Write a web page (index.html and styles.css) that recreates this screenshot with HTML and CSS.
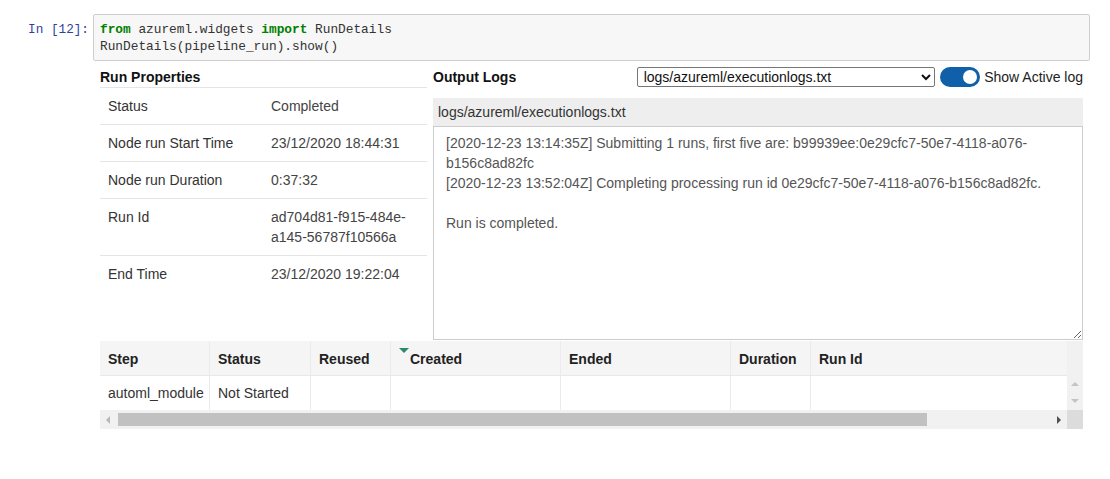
FILE: index.html
```html
<!DOCTYPE html>
<html>
<head>
<meta charset="utf-8">
<link rel="stylesheet" href="styles.css">
</head>
<body>
<div class="cell">
  <div class="prompt">In [12]:</div>
  <div class="code"><span class="kw">from</span> azureml.widgets <span class="kw">import</span> RunDetails<br>RunDetails(pipeline_run).show()</div>
</div>
<div class="output">
  <div class="widget">
    <div class="top">
      <div class="props">
        <div class="props-title">Run Properties</div>
        <div class="prop-row"><div class="k">Status</div><div class="v">Completed</div></div>
        <div class="prop-row"><div class="k">Node run Start Time</div><div class="v">23/12/2020 18:44:31</div></div>
        <div class="prop-row"><div class="k">Node run Duration</div><div class="v">0:37:32</div></div>
        <div class="prop-row"><div class="k">Run Id</div><div class="v">ad704d81-f915-484e-a145-56787f10566a</div></div>
        <div class="prop-row last"><div class="k">End Time</div><div class="v">23/12/2020 19:22:04</div></div>
      </div>
      <div class="logs">
        <div class="logs-head">
          <div class="logs-title">Output Logs</div>
          <select class="log-select"><option>logs/azureml/executionlogs.txt</option></select>
          <div class="toggle"><span class="knob"></span></div>
          <div class="toggle-label">Show Active log</div>
        </div>
        <div class="log-bar">logs/azureml/executionlogs.txt</div>
        <div class="log-text">[2020-12-23 13:14:35Z] Submitting 1 runs, first five are: b99939ee:0e29cfc7-50e7-4118-a076-b156c8ad82fc<br>[2020-12-23 13:52:04Z] Completing processing run id 0e29cfc7-50e7-4118-a076-b156c8ad82fc.<br><br>Run is completed.</div>
      </div>
    </div>
    <div class="steps">
      <div class="steps-body">
        <div class="steps-grid">
          <div class="th">Step</div>
          <div class="th">Status</div>
          <div class="th">Reused</div>
          <div class="th"><span class="sort"></span>Created</div>
          <div class="th">Ended</div>
          <div class="th">Duration</div>
          <div class="th">Run Id</div>
          <div class="td">automl_module</div>
          <div class="td">Not Started</div>
          <div class="td"></div>
          <div class="td"></div>
          <div class="td"></div>
          <div class="td"></div>
          <div class="td"></div>
        </div>
        <div class="vscroll">
          <div class="vhead"></div>
          <div class="vtrack"><span class="up"></span><span class="down"></span></div>
        </div>
      </div>
      <div class="hscroll">
        <div class="harrow"><span class="left"></span></div>
        <div class="htrack"><div class="thumb"></div><span class="right"></span></div>
        <div class="corner"></div>
      </div>
    </div>
  </div>
</div>
</body>
</html>
```
FILE: styles.css
```css
html, body {
  margin: 0;
  padding: 0;
  background: #fff;
}
body {
  padding-top: 14px;
  font-family: "Liberation Sans", Arial, sans-serif;
  font-size: 14px;
  color: #333;
}
.cell {
  display: flex;
  align-items: flex-start;
}
.prompt {
  width: 89px;
  box-sizing: border-box;
  padding-top: 7px;
  padding-right: 0;
  text-align: right;
  font-family: "Liberation Mono", monospace;
  font-size: 12.7px;
  line-height: 17px;
  color: #303f9f;
}
.code {
  margin-left: 4px;
  width: 997px;
  box-sizing: border-box;
  height: 47px;
  padding: 6px 6px;
  border: 1px solid #cfcfcf;
  border-radius: 2px;
  background: #f7f7f7;
  font-family: "Liberation Mono", monospace;
  font-size: 12.8px;
  line-height: 17px;
  color: #333;
}
.kw {
  color: #008000;
  font-weight: bold;
}
.output {
  padding-left: 100px;
  padding-top: 5px;
}
.widget {
  width: 983px;
}
.top {
  display: flex;
  gap: 6px;
}
.props {
  width: 327px;
}
.props-title {
  height: 21px;
  line-height: 22px;
  font-weight: bold;
  color: #111;
  border-bottom: 1px solid #e5e5e5;
}
.prop-row {
  display: grid;
  grid-template-columns: 163px 1fr;
  padding: 8px 8px;
  line-height: 20px;
  border-bottom: 1px solid #e5e5e5;
}
.prop-row.last {
  border-bottom: none;
}
.k { color: #333; }
.v { color: #444; }
.logs {
  width: 650px;
}
.logs-head {
  display: flex;
  align-items: center;
  height: 21px;
  margin-bottom: 11px;
}
.logs-title {
  width: 204px;
  font-weight: bold;
  color: #111;
  padding-top: 1px;
}
.log-select {
  width: 299px;
  height: 20px;
  box-sizing: border-box;
  margin: 0;
  padding: 0 0 0 2px;
  font-family: "Liberation Sans", Arial, sans-serif;
  font-size: 14px;
  color: #111;
  border: 1px solid #767676;
  border-radius: 2px;
  background: #fff;
}
.toggle {
  position: relative;
  width: 40px;
  height: 20px;
  margin-left: 5px;
  border-radius: 10px;
  background: #0f60a8;
}
.knob {
  position: absolute;
  right: 3px;
  top: 3px;
  width: 14px;
  height: 14px;
  border-radius: 50%;
  background: #fff;
}
.toggle-label {
  margin-left: 4px;
  color: #222;
  white-space: nowrap;
}
.log-bar {
  height: 28px;
  line-height: 28px;
  padding-left: 5px;
  background: #eeeeee;
  color: #333;
}
.log-text {
  height: 214px;
  box-sizing: border-box;
  padding: 6px 30px 6px 12px;
  border: 1px solid #cccccc;
  line-height: 20px;
  color: #555;
  overflow: hidden;
  resize: vertical;
}
.steps {
  margin-top: 1px;
  width: 983px;
}
.steps-body {
  display: flex;
}
.steps-grid {
  display: grid;
  grid-template-columns: 110px 101px 80px 170px 170px 80px 256px;
  grid-template-rows: 35px 34px;
  width: 967px;
}
.th, .td {
  display: flex;
  align-items: center;
  padding: 0 8px;
  border-right: 1px solid #ebebeb;
  white-space: nowrap;
}
.th {
  background: #f5f5f5;
  font-weight: bold;
  color: #222;
  border-bottom: 1px solid #e8e8e8;
  padding-top: 1px;
}
.steps-grid > :nth-child(7), .steps-grid > :nth-child(14) { border-right: none; }
.td {
  color: #333;
  background: #fff;
}
.sort {
  align-self: flex-start;
  margin-top: 6px;
  margin-right: 1px;
  width: 0;
  height: 0;
  border-left: 5px solid transparent;
  border-right: 5px solid transparent;
  border-top: 5px solid #2b8a67;
}
.vscroll {
  width: 16px;
  display: flex;
  flex-direction: column;
}
.vhead {
  height: 35px;
  background: #f1f1f1;
}
.vtrack {
  position: relative;
  height: 34px;
  background: #f1f1f1;
}
.up, .down {
  position: absolute;
  left: 4px;
  border-left: 4px solid transparent;
  border-right: 4px solid transparent;
}
.up {
  top: 6px;
  border-bottom: 4px solid #c4c4c4;
}
.down {
  top: 23px;
  border-top: 4px solid #c4c4c4;
}
.hscroll {
  display: flex;
  height: 19px;
  background: #f1f1f1;
}
.harrow {
  position: relative;
  width: 18px;
}
.left {
  position: absolute;
  left: 6px;
  top: 6px;
  border-top: 4px solid transparent;
  border-bottom: 4px solid transparent;
  border-right: 4px solid #b8b8b8;
}
.htrack {
  position: relative;
  flex: 1;
  display: flex;
  align-items: center;
}
.thumb {
  width: 809px;
  height: 13px;
  background: #c1c1c1;
}
.right {
  position: absolute;
  right: 6px;
  top: 6px;
  border-top: 4px solid transparent;
  border-bottom: 4px solid transparent;
  border-left: 4px solid #505050;
}
.corner {
  width: 16px;
  background: #dcdcdc;
}
```
